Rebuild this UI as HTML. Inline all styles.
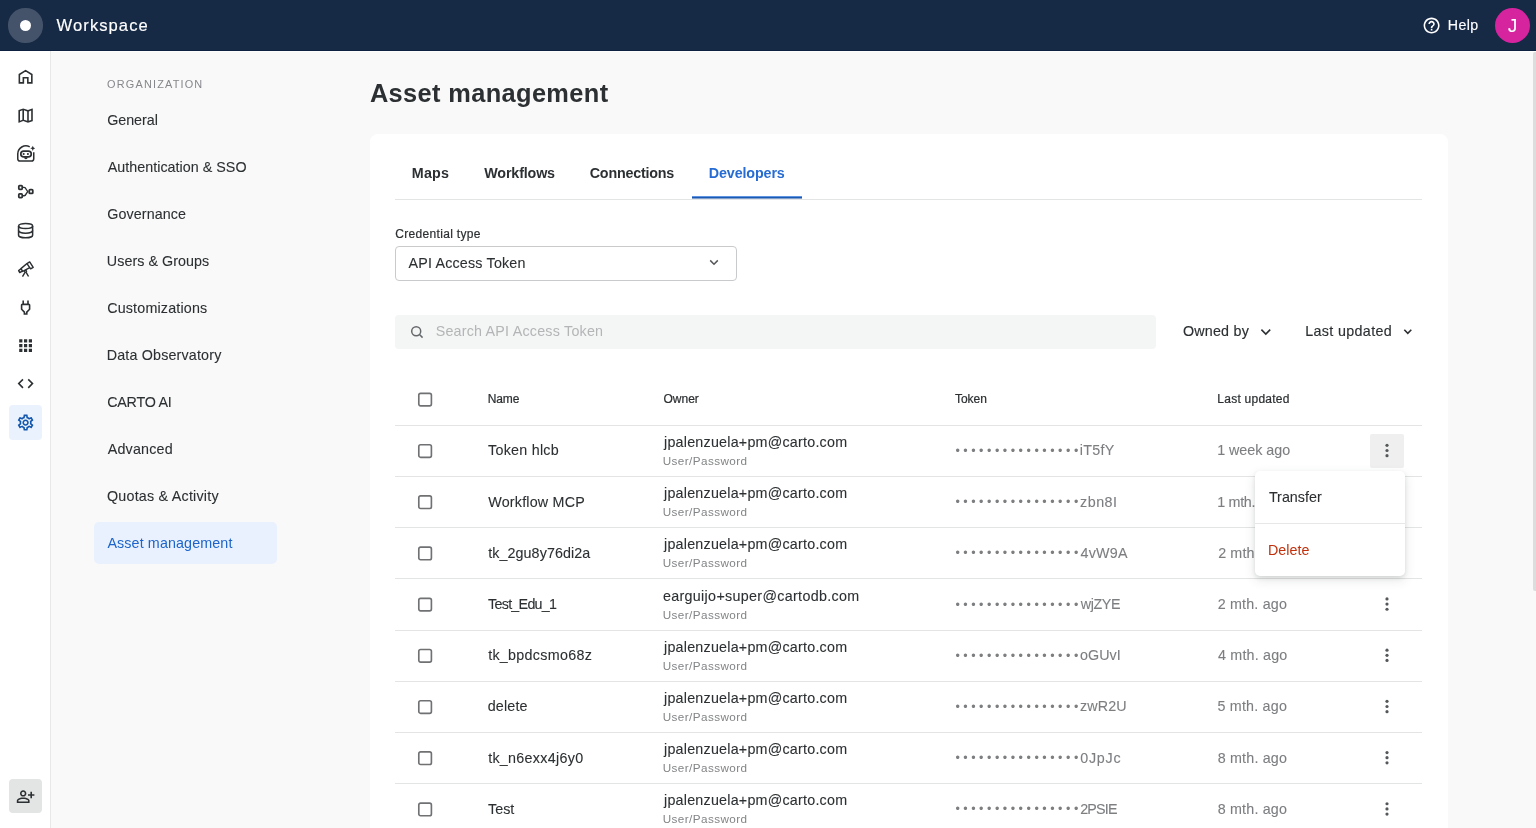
<!DOCTYPE html>
<html lang="en">
<head>
<meta charset="utf-8">
<title>Asset management - Workspace</title>
<style>
html,body{margin:0;padding:0;}
body{width:1536px;height:828px;overflow:hidden;position:relative;background:#f9f9f9;font-family:"Liberation Sans",Arial,sans-serif;color:#2c3032;}
.t{position:absolute;white-space:nowrap;font-family:"Liberation Sans",Arial,sans-serif;font-weight:400;}
.abs{position:absolute;}
header.appbar{position:absolute;left:0;top:0;width:1536px;height:51px;background:#162945;box-sizing:border-box;border-bottom:1px solid #0f2140;}
header.appbar::after{content:"";position:absolute;left:0;top:51px;width:100%;height:1px;background:#fdfdfe;}
.logo{position:absolute;left:8.4px;top:8.4px;width:34.2px;height:34.2px;border-radius:50%;background:rgba(255,255,255,.2);}
.logo i{position:absolute;left:11.2px;top:11.3px;width:11.8px;height:11.8px;border-radius:50%;background:#fff;}
.avatar{position:absolute;left:1495.2px;top:8px;width:35px;height:35px;border-radius:50%;background:#d6249f;}
nav.rail{position:absolute;left:0;top:51px;width:50px;height:777px;background:#fff;border-right:1px solid #e7e8e8;}
.rail svg{position:absolute;left:16px;width:19.2px;height:19.2px;fill:#2c3032;}
.rail .sel{position:absolute;left:8.8px;top:354.4px;width:33px;height:34.3px;border-radius:4px;background:#eaf2fd;}
.rail .inv{position:absolute;left:8.7px;top:728.1px;width:33px;height:34px;border-radius:4px;background:#e3e4e4;}
aside.side{position:absolute;left:51px;top:51px;width:319px;height:777px;}
.navsel{position:absolute;left:94.4px;top:522px;width:182.4px;height:42.4px;border-radius:5px;background:#e8f1fd;}
main.card{position:absolute;left:370px;top:134px;width:1077.5px;height:720px;background:#fff;border-radius:8px;}
.hline{position:absolute;left:395px;width:1027px;height:1px;background:#e3e4e4;}
.tabline{position:absolute;left:395px;top:199px;width:1027px;height:1px;background:#e3e4e4;}
.tabsel{position:absolute;left:692px;top:196px;width:110px;height:3px;background:linear-gradient(to bottom,#5d93e0 0,#5d93e0 1px,#1b59b3 1px,#1b59b3 2px,#7f9fd0 2px,#7f9fd0 3px);}
.select{position:absolute;left:395px;top:246.4px;width:339.8px;height:32.4px;border:1px solid #c9cacb;border-radius:4px;background:#fff;}
.search{position:absolute;left:395px;top:315px;width:761px;height:34px;border-radius:4px;background:#f4f5f5;}
.kbg{position:absolute;left:1370px;top:434px;width:34px;height:34px;border-radius:2px;background:#efefef;}
.menu{position:absolute;left:1255.2px;top:471.4px;width:149.4px;height:104.6px;border-radius:5px;background:#fff;box-shadow:0 2px 4px rgba(44,48,50,.12),0 4px 12px rgba(44,48,50,.12);}
.menu .div{position:absolute;left:0;top:51.8px;width:100%;height:1px;background:#e6e7e7;}
.scroll{position:absolute;left:1533px;top:52px;width:4px;height:539px;border-radius:2px 0 0 2px;background:#dddddd;}
.dots{position:absolute;white-space:nowrap;font-family:"Liberation Sans",Arial,sans-serif;color:#7c7e80;}
</style>
</head>
<body>
<div id="app" style="position:absolute;left:0;top:0;width:1536px;height:828px;will-change:transform;">

<header class="appbar">
  <div class="logo"><i></i></div>
  <svg class="abs" style="left:1422.2px;top:15.9px;width:19.2px;height:19.2px" viewBox="0 0 24 24" fill="#fff"><path d="M11 18h2v-2h-2zm1-16C6.480 2 2 6.480 2 12s4.480 10 10 10 10-4.480 10-10S17.520 2 12 2m0 18c-4.410 0-8-3.590-8-8s3.590-8 8-8 8 3.590 8 8-3.590 8-8 8m0-14c-2.210 0-4 1.790-4 4h2c0-1.100.900-2 2-2s2 .900 2 2c0 2-3 1.750-3 5h2c0-2.250 3-2.500 3-5 0-2.210-1.790-4-4-4"/></svg>
  <div class="avatar"></div>
  <span class="t" style="left:56.60px;top:15.00px;font-size:16.60px;line-height:21px;color:#ffffff;letter-spacing:1.057px;-webkit-text-stroke:0.15px #ffffff;">Workspace</span>
<span class="t" style="left:1447.84px;top:16.00px;font-size:14.20px;line-height:18px;color:#ffffff;letter-spacing:0.377px;-webkit-text-stroke:0.15px #ffffff;">Help</span>
<span class="t" style="left:1508.11px;top:14.00px;font-size:18.50px;line-height:23px;color:#ffffff;letter-spacing:-0.755px;-webkit-text-stroke:0.15px #ffffff;">J</span>
</header>

<nav class="rail">
  <div class="sel"></div>
  <div class="inv"></div>
  <svg viewBox="0 0 24 24" style="top:16.2px;color:#2c3032"><path d="M4.200 19.800V9.400L12 4.600l7.800 4.800v10.400h-5v-6.300H9.200v6.300z" fill="none" stroke="currentColor" stroke-width="2" stroke-linejoin="miter"/></svg>
<svg viewBox="0 0 24 24" style="top:54.6px;color:#2c3032"><path d="m20.500 3-.160.030L15 5.100 9 3 3.360 4.900c-.210.070-.360.250-.360.480V20.500c0 .280.220.500.500.500l.160-.030L9 18.900l6 2.100 5.640-1.900c.210-.070.360-.250.360-.480V3.500c0-.280-.220-.500-.500-.500M10 5.470l4 1.400v11.660l-4-1.400zm-5 .990 3-1.010v11.700l-3 1.160zm14 11.080-3 1.010V6.860l3-1.160z" fill="currentColor"/></svg>
<svg viewBox="0 0 24 24" style="top:93.0px;color:#2c3032"><g fill="none" stroke="currentColor" stroke-width="1.900"><path d="M17.200 3.500A10.200 10.200 0 0 0 2.200 12.400v6c0 1.700 1.200 2.900 2.900 2.900h14.200c1.700 0 2.900-1.200 2.900-2.900v-8.200"/><rect x="6" y="8.850" width="13.100" height="7.300" rx="3.650" stroke-width="2.100"/></g><circle cx="9.600" cy="12.500" r="1.300" fill="currentColor"/><circle cx="14.900" cy="12.500" r="1.300" fill="currentColor"/><path d="M10.200 16.600h4.400c0 1.500-1 2.500-2.200 2.500s-2.200-1-2.200-2.500z" fill="currentColor"/><path d="M21 2.200l1 2.200 2.200 1-2.200 1-1 2.200-1-2.200-2.200-1 2.200-1z" fill="currentColor"/></svg>
<svg viewBox="0 0 24 24" style="top:131.4px;color:#2c3032"><g fill="none" stroke="currentColor" stroke-width="1.900"><rect x="3.500" y="4.500" width="4.300" height="4.700" rx="1" stroke-width="2.200"/><rect x="3.500" y="14.800" width="4.300" height="4.800" rx="1" stroke-width="2.200"/><rect x="16.600" y="9.600" width="4.400" height="4.700" rx="1" stroke-width="2.200"/><path d="M8.700 6.800H10.200C13.200 6.800 12.600 11.900 15.600 11.900M8.700 17.200H10.200C13.200 17.200 12.600 11.900 15.600 11.900" stroke-width="1.700"/></g></svg>
<svg viewBox="0 0 24 24" style="top:169.8px;color:#2c3032"><g fill="none" stroke="currentColor" stroke-width="1.900"><ellipse cx="12" cy="6.300" rx="8.800" ry="3.200"/><path d="M3.200 6.300v11.400c0 1.820 3.940 3.300 8.800 3.300s8.800-1.480 8.800-3.300V6.300"/><path d="M3.200 12c0 1.820 3.940 3.300 8.800 3.300s8.800-1.480 8.800-3.300"/></g></svg>
<svg viewBox="0 0 24 24" style="top:208.2px;color:#2c3032"><g fill="none" stroke="currentColor" stroke-width="1.800" stroke-linejoin="round"><path d="M17.100 3.700 13.700 5.700 18.300 12.300 21.500 10.400z"/><path d="M13.700 5.700 6.200 12 8.400 15.600 17.200 10.800"/><path d="M6.200 12.200 3.300 14.600 4.700 16.900 8 15.200"/><circle cx="12" cy="15.400" r="1.300" stroke-width="1.600"/><path d="M11.300 16.600 8.100 21.900M12.700 16.600 15.700 21.900"/></g></svg>
<svg viewBox="0 0 24 24" style="top:246.6px;color:#2c3032"><path d="M16 9v4.660l-3.500 3.510V19h-1v-1.830L8 13.650V9zm0-6h-2v4h-4V3H8v4h-.010C6.900 6.990 6 7.890 6 8.980v5.520L9.500 18v3h5v-3l3.500-3.510V9c0-1.100-.900-2-2-2z" fill="currentColor"/></svg>
<svg viewBox="0 0 24 24" style="top:285.0px;color:#2c3032"><path d="M4 8h4V4H4zm6 12h4v-4h-4zm-6 0h4v-4H4zm0-6h4v-4H4zm6 0h4v-4h-4zm6-10v4h4V4zm-6 4h4V4h-4zm6 6h4v-4h-4zm0 6h4v-4h-4z" fill="currentColor"/></svg>
<svg viewBox="0 0 24 24" style="top:323.4px;color:#2c3032"><path d="M9.400 16.600 4.800 12l4.600-4.600L8 6l-6 6 6 6zm5.200 0 4.600-4.600-4.600-4.600L16 6l6 6-6 6z" fill="currentColor"/></svg>
<svg viewBox="0 0 24 24" style="top:361.8px;color:#1256ad"><path d="M19.430 12.980c.040-.320.070-.640.070-.980 0-.340-.030-.660-.070-.980l2.110-1.650c.190-.150.240-.420.120-.640l-2-3.460c-.090-.160-.260-.250-.440-.250-.060 0-.120.010-.170.030l-2.490 1c-.520-.400-1.080-.730-1.690-.980l-.380-2.650C14.460 2.180 14.250 2 14 2h-4c-.250 0-.460.180-.490.420l-.380 2.650c-.610.250-1.170.590-1.690.980l-2.490-1c-.060-.020-.120-.030-.180-.030-.170 0-.340.090-.430.250l-2 3.460c-.130.220-.070.490.120.640l2.110 1.650c-.040.320-.070.650-.070.980s.030.660.070.980l-2.110 1.650c-.190.150-.240.420-.120.640l2 3.460c.090.160.260.250.440.250.060 0 .120-.010.170-.030l2.490-1c.520.400 1.080.730 1.690.980l.380 2.650c.030.240.240.420.490.420h4c.250 0 .460-.180.490-.420l.380-2.650c.610-.250 1.170-.590 1.690-.980l2.490 1c.060.020.120.030.180.030.170 0 .340-.090.430-.250l2-3.460c.120-.220.070-.490-.120-.640zm-1.980-1.710c.040.310.050.520.050.730s-.020.430-.050.730l-.140 1.130.890.700 1.080.840-.700 1.210-1.270-.510-1.040-.420-.900.680c-.430.320-.840.560-1.250.730l-1.060.430-.160 1.130-.200 1.350h-1.400l-.190-1.350-.160-1.130-1.060-.430c-.430-.180-.830-.410-1.230-.710l-.910-.700-1.060.430-1.270.510-.700-1.210 1.080-.840.890-.700-.140-1.130c-.030-.310-.050-.540-.050-.740s.020-.430.050-.730l.140-1.130-.890-.700-1.080-.840.700-1.210 1.270.510 1.040.420.900-.680c.430-.320.840-.560 1.250-.730l1.060-.430.160-1.130.200-1.350h1.390l.190 1.350.160 1.130 1.060.430c.430.180.830.410 1.230.710l.910.700 1.060-.430 1.270-.510.700 1.210-1.070.850-.890.700zM12 8c-2.210 0-4 1.790-4 4s1.790 4 4 4 4-1.790 4-4-1.790-4-4-4m0 6c-1.100 0-2-.900-2-2s.900-2 2-2 2 .900 2 2-.900 2-2 2" fill="currentColor"/></svg>
<svg viewBox="0 0 24 24" style="top:736.0px;color:#2c3032"><path d="M20 9V6h-2v3h-3v2h3v3h2v-3h3V9zM9 12c2.210 0 4-1.790 4-4s-1.790-4-4-4-4 1.790-4 4 1.790 4 4 4m0-6c1.100 0 2 .900 2 2s-.900 2-2 2-2-.900-2-2 .900-2 2-2m6.390 8.560C13.710 13.700 11.530 13 9 13s-4.710.700-6.390 1.560C1.610 15.070 1 16.100 1 17.220V20h16v-2.780c0-1.120-.610-2.150-1.610-2.660M15 18H3v-.780c0-.380.200-.720.520-.880C4.710 15.730 6.630 15 9 15s4.290.730 5.480 1.340c.320.160.520.500.520.880z" fill="currentColor"/></svg>
</nav>

<aside class="side"></aside>
<div class="navsel"></div>
<span class="t" style="left:107.11px;top:77.00px;font-size:10.90px;line-height:14px;color:#85878a;letter-spacing:1.185px;">ORGANIZATION</span>
<span class="t" style="left:107.19px;top:111.00px;font-size:14.30px;line-height:18px;color:#2c3032;letter-spacing:-0.035px;-webkit-text-stroke:0.10px #2c3032;">General</span>
<span class="t" style="left:107.71px;top:158.00px;font-size:14.30px;line-height:18px;color:#2c3032;letter-spacing:0.027px;-webkit-text-stroke:0.10px #2c3032;">Authentication &amp; SSO</span>
<span class="t" style="left:107.19px;top:205.00px;font-size:14.30px;line-height:18px;color:#2c3032;letter-spacing:0.111px;-webkit-text-stroke:0.10px #2c3032;">Governance</span>
<span class="t" style="left:106.80px;top:252.00px;font-size:14.30px;line-height:18px;color:#2c3032;letter-spacing:0.056px;-webkit-text-stroke:0.10px #2c3032;">Users &amp; Groups</span>
<span class="t" style="left:107.15px;top:299.00px;font-size:14.30px;line-height:18px;color:#2c3032;letter-spacing:0.180px;-webkit-text-stroke:0.10px #2c3032;">Customizations</span>
<span class="t" style="left:106.73px;top:346.00px;font-size:14.30px;line-height:18px;color:#2c3032;letter-spacing:0.171px;-webkit-text-stroke:0.10px #2c3032;">Data Observatory</span>
<span class="t" style="left:107.15px;top:393.00px;font-size:14.30px;line-height:18px;color:#2c3032;letter-spacing:-0.223px;-webkit-text-stroke:0.10px #2c3032;">CARTO AI</span>
<span class="t" style="left:107.71px;top:440.00px;font-size:14.30px;line-height:18px;color:#2c3032;letter-spacing:0.205px;-webkit-text-stroke:0.10px #2c3032;">Advanced</span>
<span class="t" style="left:106.97px;top:487.00px;font-size:14.30px;line-height:18px;color:#2c3032;letter-spacing:0.224px;-webkit-text-stroke:0.10px #2c3032;">Quotas &amp; Activity</span>
<span class="t" style="left:107.41px;top:534.00px;font-size:14.30px;line-height:18px;color:#1d64cb;letter-spacing:0.119px;">Asset management</span>

<main class="card"></main>
<div class="tabline"></div><div class="tabsel"></div>
<span class="t" style="left:411.86px;top:164.00px;font-size:14.30px;line-height:18px;color:#2c3032;letter-spacing:0.173px;font-weight:700;">Maps</span>
<span class="t" style="left:484.30px;top:164.00px;font-size:14.30px;line-height:18px;color:#2c3032;letter-spacing:-0.160px;font-weight:700;">Workflows</span>
<span class="t" style="left:589.77px;top:164.00px;font-size:14.30px;line-height:18px;color:#2c3032;letter-spacing:-0.219px;font-weight:700;">Connections</span>
<span class="t" style="left:708.78px;top:164.00px;font-size:14.30px;line-height:18px;color:#266cd3;letter-spacing:-0.117px;font-weight:700;">Developers</span>
<div class="select"></div>
<svg class="abs" style="left:709.3px;top:259.4px;width:10px;height:7px" viewBox="0 0 10 7"><path d="M1.2 1.4 5 5.2 8.800 1.400" fill="none" stroke="#55585a" stroke-width="1.5"/></svg>
<div class="search"></div>
<svg class="abs" style="left:410.4px;top:325px;width:14px;height:14px" viewBox="0 0 14 14"><circle cx="6.200" cy="6.200" r="4.500" fill="none" stroke="#66696b" stroke-width="1.500"/><path d="M9.500 9.500 12.600 12.600" stroke="#66696b" stroke-width="1.500" fill="none"/></svg>
<svg class="abs" style="left:1260px;top:328px;width:12px;height:8px" viewBox="0 0 12 8"><path d="M1.400 1.600 5.800 6 10.200 1.600" fill="none" stroke="#2c3032" stroke-width="1.600"/></svg>
<svg class="abs" style="left:1403px;top:328px;width:10px;height:8px" viewBox="0 0 10 8"><path d="M1.300 1.800 4.800 5.300 8.300 1.800" fill="none" stroke="#2c3032" stroke-width="1.600"/></svg>
<span class="t" style="left:369.88px;top:78.00px;font-size:25.40px;line-height:30px;color:#2c3032;letter-spacing:0.360px;font-weight:700;">Asset management</span>
<span class="t" style="left:395.29px;top:226.00px;font-size:12.00px;line-height:16px;color:#2c3032;letter-spacing:0.321px;-webkit-text-stroke:0.20px #2c3032;">Credential type</span>
<span class="t" style="left:408.50px;top:254.00px;font-size:14.30px;line-height:18px;color:#2c3032;letter-spacing:0.185px;-webkit-text-stroke:0.10px #2c3032;">API Access Token</span>
<span class="t" style="left:435.63px;top:322.00px;font-size:14.30px;line-height:18px;color:#b3b5b6;letter-spacing:0.216px;">Search API Access Token</span>
<span class="t" style="left:1182.89px;top:322.00px;font-size:14.30px;line-height:18px;color:#2c3032;letter-spacing:0.223px;-webkit-text-stroke:0.15px #2c3032;">Owned by</span>
<span class="t" style="left:1305.14px;top:322.00px;font-size:14.30px;line-height:18px;color:#2c3032;letter-spacing:0.361px;-webkit-text-stroke:0.15px #2c3032;">Last updated</span>
<span class="t" style="left:487.65px;top:391.00px;font-size:12.00px;line-height:16px;color:#2c3032;letter-spacing:-0.067px;-webkit-text-stroke:0.22px #2c3032;">Name</span>
<span class="t" style="left:663.52px;top:391.00px;font-size:12.00px;line-height:16px;color:#2c3032;letter-spacing:-0.002px;-webkit-text-stroke:0.22px #2c3032;">Owner</span>
<span class="t" style="left:955.07px;top:391.00px;font-size:12.00px;line-height:16px;color:#2c3032;letter-spacing:-0.061px;-webkit-text-stroke:0.22px #2c3032;">Token</span>
<span class="t" style="left:1217.32px;top:391.00px;font-size:12.00px;line-height:16px;color:#2c3032;letter-spacing:0.245px;-webkit-text-stroke:0.22px #2c3032;">Last updated</span>
<svg class="abs" style="left:415px;top:389px;width:20px;height:20px" viewBox="0 0 20 20"><rect x="3.80" y="4.30" width="12.6" height="12.6" rx="1.8" fill="#fff" stroke="#6f7173" stroke-width="1.65"/></svg>
<section class="row"><div class="hline" style="top:424.8px"></div>
<svg class="abs" style="left:415px;top:441px;width:20px;height:20px" viewBox="0 0 20 20"><rect x="3.80" y="3.70" width="12.6" height="12.6" rx="1.8" fill="#fff" stroke="#6f7173" stroke-width="1.65"/></svg>
<div class="kbg"></div>
<span class="dots" style="left:955.4px;top:443.00px;font-size:12.5px;line-height:16px;letter-spacing:3.525px">••••••••••••••••</span>
<svg class="abs" style="left:1377px;top:440px;width:20px;height:20px" viewBox="0 0 20 20" fill="#55585a"><circle cx="10" cy="5.35" r="1.6"/><circle cx="10" cy="10.50" r="1.6"/><circle cx="10" cy="15.65" r="1.6"/></svg>
<span class="t" style="left:488.08px;top:441.00px;font-size:14.30px;line-height:18px;color:#2c3032;letter-spacing:0.253px;-webkit-text-stroke:0.10px #2c3032;">Token hlcb</span>
<span class="t" style="left:664.04px;top:433.00px;font-size:14.30px;line-height:18px;color:#2c3032;letter-spacing:0.226px;-webkit-text-stroke:0.10px #2c3032;">jpalenzuela+pm@carto.com</span>
<span class="t" style="left:662.69px;top:453.00px;font-size:11.70px;line-height:15px;color:#828486;letter-spacing:0.431px;">User/Password</span>
<span class="t" style="left:1079.73px;top:441.00px;font-size:14.30px;line-height:18px;color:#7c7e80;letter-spacing:0.317px;-webkit-text-stroke:0.10px #7c7e80;">iT5fY</span>
<span class="t" style="left:1217.16px;top:441.00px;font-size:14.30px;line-height:18px;color:#7c7e80;letter-spacing:-0.014px;-webkit-text-stroke:0.10px #7c7e80;">1 week ago</span></section>
<section class="row"><div class="hline" style="top:476.0px"></div>
<svg class="abs" style="left:415px;top:492px;width:20px;height:20px" viewBox="0 0 20 20"><rect x="3.80" y="3.90" width="12.6" height="12.6" rx="1.8" fill="#fff" stroke="#6f7173" stroke-width="1.65"/></svg>
<span class="dots" style="left:955.4px;top:494.20px;font-size:12.5px;line-height:16px;letter-spacing:3.525px">••••••••••••••••</span>
<svg class="abs" style="left:1377px;top:491px;width:20px;height:20px" viewBox="0 0 20 20" fill="#55585a"><circle cx="10" cy="5.55" r="1.6"/><circle cx="10" cy="10.70" r="1.6"/><circle cx="10" cy="15.85" r="1.6"/></svg>
<span class="t" style="left:488.23px;top:493.00px;font-size:14.30px;line-height:18px;color:#2c3032;letter-spacing:0.204px;-webkit-text-stroke:0.10px #2c3032;">Workflow MCP</span>
<span class="t" style="left:664.04px;top:484.00px;font-size:14.30px;line-height:18px;color:#2c3032;letter-spacing:0.226px;-webkit-text-stroke:0.10px #2c3032;">jpalenzuela+pm@carto.com</span>
<span class="t" style="left:662.69px;top:504.00px;font-size:11.70px;line-height:15px;color:#828486;letter-spacing:0.431px;">User/Password</span>
<span class="t" style="left:1080.11px;top:493.00px;font-size:14.30px;line-height:18px;color:#7c7e80;letter-spacing:0.477px;-webkit-text-stroke:0.10px #7c7e80;">zbn8I</span>
<span class="t" style="left:1217.25px;top:493.00px;font-size:14.30px;line-height:18px;color:#7c7e80;letter-spacing:-0.299px;-webkit-text-stroke:0.10px #7c7e80;">1 mth.</span>
<span class="t" style="left:1259.63px;top:493.00px;font-size:14.30px;line-height:18px;color:#7c7e80;letter-spacing:1.657px;-webkit-text-stroke:0.10px #7c7e80;">ago</span></section>
<section class="row"><div class="hline" style="top:527.2px"></div>
<svg class="abs" style="left:415px;top:543px;width:20px;height:20px" viewBox="0 0 20 20"><rect x="3.80" y="4.10" width="12.6" height="12.6" rx="1.8" fill="#fff" stroke="#6f7173" stroke-width="1.65"/></svg>
<span class="dots" style="left:955.4px;top:545.40px;font-size:12.5px;line-height:16px;letter-spacing:3.525px">••••••••••••••••</span>
<svg class="abs" style="left:1377px;top:542px;width:20px;height:20px" viewBox="0 0 20 20" fill="#55585a"><circle cx="10" cy="5.75" r="1.6"/><circle cx="10" cy="10.90" r="1.6"/><circle cx="10" cy="16.05" r="1.6"/></svg>
<span class="t" style="left:488.14px;top:544.00px;font-size:14.30px;line-height:18px;color:#2c3032;letter-spacing:0.091px;-webkit-text-stroke:0.10px #2c3032;">tk_2gu8y76di2a</span>
<span class="t" style="left:664.04px;top:535.00px;font-size:14.30px;line-height:18px;color:#2c3032;letter-spacing:0.226px;-webkit-text-stroke:0.10px #2c3032;">jpalenzuela+pm@carto.com</span>
<span class="t" style="left:662.69px;top:555.00px;font-size:11.70px;line-height:15px;color:#828486;letter-spacing:0.431px;">User/Password</span>
<span class="t" style="left:1080.56px;top:544.00px;font-size:14.30px;line-height:18px;color:#7c7e80;letter-spacing:0.214px;-webkit-text-stroke:0.10px #7c7e80;">4vW9A</span>
<span class="t" style="left:1218.18px;top:544.00px;font-size:14.30px;line-height:18px;color:#7c7e80;letter-spacing:0.130px;-webkit-text-stroke:0.10px #7c7e80;">2 mth</span>
<span class="t" style="left:1254.71px;top:544.00px;font-size:14.30px;line-height:18px;color:#7c7e80;letter-spacing:0.134px;-webkit-text-stroke:0.10px #7c7e80;">. ago</span></section>
<section class="row"><div class="hline" style="top:578.4px"></div>
<svg class="abs" style="left:415px;top:594px;width:20px;height:20px" viewBox="0 0 20 20"><rect x="3.80" y="4.30" width="12.6" height="12.6" rx="1.8" fill="#fff" stroke="#6f7173" stroke-width="1.65"/></svg>
<span class="dots" style="left:955.4px;top:596.60px;font-size:12.5px;line-height:16px;letter-spacing:3.525px">••••••••••••••••</span>
<svg class="abs" style="left:1377px;top:594px;width:20px;height:20px" viewBox="0 0 20 20" fill="#55585a"><circle cx="10" cy="4.95" r="1.6"/><circle cx="10" cy="10.10" r="1.6"/><circle cx="10" cy="15.25" r="1.6"/></svg>
<span class="t" style="left:488.08px;top:595.00px;font-size:14.30px;line-height:18px;color:#2c3032;letter-spacing:-0.732px;-webkit-text-stroke:0.10px #2c3032;">Test_Edu_1</span>
<span class="t" style="left:662.93px;top:587.00px;font-size:14.30px;line-height:18px;color:#2c3032;letter-spacing:0.323px;-webkit-text-stroke:0.10px #2c3032;">earguijo+super@cartodb.com</span>
<span class="t" style="left:662.69px;top:607.00px;font-size:11.70px;line-height:15px;color:#828486;letter-spacing:0.431px;">User/Password</span>
<span class="t" style="left:1080.72px;top:595.00px;font-size:14.30px;line-height:18px;color:#7c7e80;letter-spacing:-0.364px;-webkit-text-stroke:0.10px #7c7e80;">wjZYE</span>
<span class="t" style="left:1217.64px;top:595.00px;font-size:14.30px;line-height:18px;color:#7c7e80;letter-spacing:0.195px;-webkit-text-stroke:0.10px #7c7e80;">2 mth. ago</span></section>
<section class="row"><div class="hline" style="top:629.6px"></div>
<svg class="abs" style="left:415px;top:645px;width:20px;height:20px" viewBox="0 0 20 20"><rect x="3.80" y="4.50" width="12.6" height="12.6" rx="1.8" fill="#fff" stroke="#6f7173" stroke-width="1.65"/></svg>
<span class="dots" style="left:955.4px;top:647.80px;font-size:12.5px;line-height:16px;letter-spacing:3.525px">••••••••••••••••</span>
<svg class="abs" style="left:1377px;top:645px;width:20px;height:20px" viewBox="0 0 20 20" fill="#55585a"><circle cx="10" cy="5.15" r="1.6"/><circle cx="10" cy="10.30" r="1.6"/><circle cx="10" cy="15.45" r="1.6"/></svg>
<span class="t" style="left:488.14px;top:646.00px;font-size:14.30px;line-height:18px;color:#2c3032;letter-spacing:0.294px;-webkit-text-stroke:0.10px #2c3032;">tk_bpdcsmo68z</span>
<span class="t" style="left:664.04px;top:638.00px;font-size:14.30px;line-height:18px;color:#2c3032;letter-spacing:0.226px;-webkit-text-stroke:0.10px #2c3032;">jpalenzuela+pm@carto.com</span>
<span class="t" style="left:662.69px;top:658.00px;font-size:11.70px;line-height:15px;color:#828486;letter-spacing:0.431px;">User/Password</span>
<span class="t" style="left:1080.06px;top:646.00px;font-size:14.30px;line-height:18px;color:#7c7e80;letter-spacing:0.053px;-webkit-text-stroke:0.10px #7c7e80;">oGUvI</span>
<span class="t" style="left:1217.98px;top:646.00px;font-size:14.30px;line-height:18px;color:#7c7e80;letter-spacing:0.199px;-webkit-text-stroke:0.10px #7c7e80;">4 mth. ago</span></section>
<section class="row"><div class="hline" style="top:680.8px"></div>
<svg class="abs" style="left:415px;top:697px;width:20px;height:20px" viewBox="0 0 20 20"><rect x="3.80" y="3.70" width="12.6" height="12.6" rx="1.8" fill="#fff" stroke="#6f7173" stroke-width="1.65"/></svg>
<span class="dots" style="left:955.4px;top:699.00px;font-size:12.5px;line-height:16px;letter-spacing:3.525px">••••••••••••••••</span>
<svg class="abs" style="left:1377px;top:696px;width:20px;height:20px" viewBox="0 0 20 20" fill="#55585a"><circle cx="10" cy="5.35" r="1.6"/><circle cx="10" cy="10.50" r="1.6"/><circle cx="10" cy="15.65" r="1.6"/></svg>
<span class="t" style="left:487.77px;top:697.00px;font-size:14.30px;line-height:18px;color:#2c3032;letter-spacing:0.158px;-webkit-text-stroke:0.10px #2c3032;">delete</span>
<span class="t" style="left:664.04px;top:689.00px;font-size:14.30px;line-height:18px;color:#2c3032;letter-spacing:0.226px;-webkit-text-stroke:0.10px #2c3032;">jpalenzuela+pm@carto.com</span>
<span class="t" style="left:662.69px;top:709.00px;font-size:11.70px;line-height:15px;color:#828486;letter-spacing:0.431px;">User/Password</span>
<span class="t" style="left:1080.11px;top:697.00px;font-size:14.30px;line-height:18px;color:#7c7e80;letter-spacing:0.081px;-webkit-text-stroke:0.10px #7c7e80;">zwR2U</span>
<span class="t" style="left:1217.43px;top:697.00px;font-size:14.30px;line-height:18px;color:#7c7e80;letter-spacing:0.208px;-webkit-text-stroke:0.10px #7c7e80;">5 mth. ago</span></section>
<section class="row"><div class="hline" style="top:732.0px"></div>
<svg class="abs" style="left:415px;top:748px;width:20px;height:20px" viewBox="0 0 20 20"><rect x="3.80" y="3.90" width="12.6" height="12.6" rx="1.8" fill="#fff" stroke="#6f7173" stroke-width="1.65"/></svg>
<span class="dots" style="left:955.4px;top:750.20px;font-size:12.5px;line-height:16px;letter-spacing:3.525px">••••••••••••••••</span>
<svg class="abs" style="left:1377px;top:747px;width:20px;height:20px" viewBox="0 0 20 20" fill="#55585a"><circle cx="10" cy="5.55" r="1.6"/><circle cx="10" cy="10.70" r="1.6"/><circle cx="10" cy="15.85" r="1.6"/></svg>
<span class="t" style="left:488.14px;top:749.00px;font-size:14.30px;line-height:18px;color:#2c3032;letter-spacing:0.302px;-webkit-text-stroke:0.10px #2c3032;">tk_n6exx4j6y0</span>
<span class="t" style="left:664.04px;top:740.00px;font-size:14.30px;line-height:18px;color:#2c3032;letter-spacing:0.226px;-webkit-text-stroke:0.10px #2c3032;">jpalenzuela+pm@carto.com</span>
<span class="t" style="left:662.69px;top:760.00px;font-size:11.70px;line-height:15px;color:#828486;letter-spacing:0.431px;">User/Password</span>
<span class="t" style="left:1080.21px;top:749.00px;font-size:14.30px;line-height:18px;color:#7c7e80;letter-spacing:0.773px;-webkit-text-stroke:0.10px #7c7e80;">0JpJc</span>
<span class="t" style="left:1217.72px;top:749.00px;font-size:14.30px;line-height:18px;color:#7c7e80;letter-spacing:0.185px;-webkit-text-stroke:0.10px #7c7e80;">8 mth. ago</span></section>
<section class="row"><div class="hline" style="top:783.2px"></div>
<svg class="abs" style="left:415px;top:799px;width:20px;height:20px" viewBox="0 0 20 20"><rect x="3.80" y="4.10" width="12.6" height="12.6" rx="1.8" fill="#fff" stroke="#6f7173" stroke-width="1.65"/></svg>
<span class="dots" style="left:955.4px;top:801.40px;font-size:12.5px;line-height:16px;letter-spacing:3.525px">••••••••••••••••</span>
<svg class="abs" style="left:1377px;top:798px;width:20px;height:20px" viewBox="0 0 20 20" fill="#55585a"><circle cx="10" cy="5.75" r="1.6"/><circle cx="10" cy="10.90" r="1.6"/><circle cx="10" cy="16.05" r="1.6"/></svg>
<span class="t" style="left:488.08px;top:800.00px;font-size:14.30px;line-height:18px;color:#2c3032;letter-spacing:-0.018px;-webkit-text-stroke:0.10px #2c3032;">Test</span>
<span class="t" style="left:664.04px;top:791.00px;font-size:14.30px;line-height:18px;color:#2c3032;letter-spacing:0.226px;-webkit-text-stroke:0.10px #2c3032;">jpalenzuela+pm@carto.com</span>
<span class="t" style="left:662.69px;top:811.00px;font-size:11.70px;line-height:15px;color:#828486;letter-spacing:0.431px;">User/Password</span>
<span class="t" style="left:1080.18px;top:800.00px;font-size:14.30px;line-height:18px;color:#7c7e80;letter-spacing:-0.814px;-webkit-text-stroke:0.10px #7c7e80;">2PSIE</span>
<span class="t" style="left:1217.72px;top:800.00px;font-size:14.30px;line-height:18px;color:#7c7e80;letter-spacing:0.185px;-webkit-text-stroke:0.10px #7c7e80;">8 mth. ago</span></section>
<div class="menu"><div class="div"></div></div>
<span class="t" style="left:1268.89px;top:488.00px;font-size:14.30px;line-height:18px;color:#2c3032;letter-spacing:0.021px;-webkit-text-stroke:0.10px #2c3032;">Transfer</span>
<span class="t" style="left:1267.98px;top:541.00px;font-size:14.30px;line-height:18px;color:#c1300b;letter-spacing:0.055px;">Delete</span>
<div class="scroll"></div>
</div>
</body>
</html>
